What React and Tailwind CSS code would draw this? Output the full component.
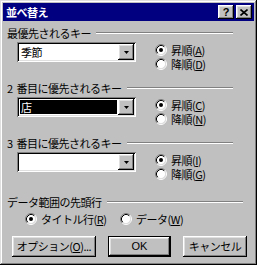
const raised =
  "shadow-[inset_-1px_-1px_#000,inset_1px_1px_#fff,inset_-2px_-2px_#808080,inset_2px_2px_#dfdfdf]";
const sunken =
  "shadow-[inset_1px_1px_#808080,inset_-1px_-1px_#fff,inset_2px_2px_#000,inset_-2px_-2px_#dfdfdf]";

function Radio({ checked }) {
  return (
    <svg width="12" height="12" viewBox="0 0 12 12" className="shrink-0">
      <circle cx="6" cy="6" r="4.5" fill="#fff" />
      <path d="M2.11 9.89A5.5 5.5 0 0 1 9.89 2.11" fill="none" stroke="#808080" />
      <path d="M9.89 2.11A5.5 5.5 0 0 1 2.11 9.89" fill="none" stroke="#fff" />
      <path d="M2.82 9.18A4.5 4.5 0 0 1 9.18 2.82" fill="none" stroke="#000" />
      <path d="M9.18 2.82A4.5 4.5 0 0 1 2.82 9.18" fill="none" stroke="#dfdfdf" />
      {checked && <circle cx="6" cy="6" r="2" fill="#000" />}
    </svg>
  );
}

function Acc({ text, k }) {
  return (
    <span className="leading-[11px]">
      {text}(<u className="underline-offset-1">{k}</u>)
    </span>
  );
}

function RadioRow({ checked, text, k }) {
  return (
    <div className="flex h-[14px] items-center gap-[4px]">
      <Radio checked={checked} />
      <Acc text={text} k={k} />
    </div>
  );
}

function Combo({ value, selected }) {
  return (
    <div className={`flex h-[20px] w-[119px] bg-white p-[2px] ${sunken}`}>
      <div className="flex flex-1 p-[1px]">
        {value && (
          <span
            className={`flex flex-1 items-center pl-[1px] ${selected ? "bg-black text-white" : ""}`}
          >
            {value}
          </span>
        )}
      </div>
      <div className={`flex w-[16px] items-center justify-center bg-[#c0c0c0] ${raised}`}>
        <svg width="5" height="3" viewBox="0 0 5 3">
          <path d="M0 0h5L2.5 3z" fill="#000" />
        </svg>
      </div>
    </div>
  );
}

function GroupHeader({ children, mr }) {
  return (
    <div className={`flex h-[14px] items-center ${mr}`}>
      <span>{children}</span>
      <div className="ml-[5px] h-[2px] flex-1 border-t border-b border-t-[#808080] border-b-white" />
    </div>
  );
}

function SortGroup({ label, value, selected, up, down }) {
  return (
    <>
      <GroupHeader mr="mr-[17px]">{label}</GroupHeader>
      <div className="mt-[2px] flex h-[39px] pl-[10px]">
        <Combo value={value} selected={selected} />
        <div className="ml-[19px] flex flex-col pt-[1px]">
          <RadioRow checked text="昇順" k={up} />
          <RadioRow text="降順" k={down} />
        </div>
      </div>
    </>
  );
}

function Button({ children, w, isDefault }) {
  const frame = isDefault
    ? "shadow-[inset_0_0_0_1px_#000,inset_-2px_-2px_#000,inset_2px_2px_#fff,inset_-3px_-3px_#808080,inset_3px_3px_#dfdfdf]"
    : raised;
  return (
    <div className={`flex h-[21px] items-center justify-center bg-[#c0c0c0] ${w} ${frame}`}>
      {children}
    </div>
  );
}

export default function App() {
  return (
    <div
      className={`flex h-[265px] w-[257px] flex-col bg-[#c0c0c0] p-[3px] font-[family-name:'Noto_Sans_CJK_JP',sans-serif] text-[11px] leading-none tracking-[-0.5px] text-black shadow-[inset_-1px_-1px_#000,inset_1px_1px_#dfdfdf,inset_-2px_-2px_#808080,inset_2px_2px_#fff]`}
    >
      <div className="flex h-[18px] items-center bg-[#000080] pl-[3px] pr-[2px]">
        <span className="font-bold text-white">並べ替え</span>
        <div className="ml-auto flex gap-[2px]">
          <div className={`flex h-[14px] w-[16px] items-center justify-center bg-[#c0c0c0] font-['Liberation_Sans',sans-serif] text-[11px] font-bold tracking-normal ${raised}`}>
            ?
          </div>
          <div className={`flex h-[14px] w-[16px] items-center justify-center bg-[#c0c0c0] ${raised}`}>
            <svg width="8" height="7" viewBox="0 0 8 7">
              <path d="M0.5 0.5l7 6M7.5 0.5l-7 6" stroke="#000" strokeWidth="1.6" />
            </svg>
          </div>
        </div>
      </div>

      <div className="flex flex-1 flex-col pl-[4px] pr-[4px]">
        <div className="mt-[5px]" />
        <SortGroup label="最優先されるキー" value="季節" up="A" down="D" />
        <SortGroup
          label={<><span className="mr-[4px]">2</span>番目に優先されるキー</>}
          value="店"
          selected
          up="C"
          down="N"
        />
        <SortGroup
          label={<><span className="mr-[4px]">3</span>番目に優先されるキー</>}
          value=""
          up="I"
          down="G"
        />

        <div className="mt-[4px]">
          <GroupHeader mr="mr-[7px]">データ範囲の先頭行</GroupHeader>
        </div>
        <div className="mt-[3px] flex pl-[18px]">
          <div className="w-[95px]">
            <RadioRow checked text="タイトル行" k="R" />
          </div>
          <RadioRow text="データ" k="W" />
        </div>

        <div className="mt-[10px] ml-[5px] flex gap-[12px]">
          <Button w="w-[84px]">
            <Acc text="オプション" k="O" />
            ...
          </Button>
          <Button w="w-[63px]" isDefault>
            <span className="font-['Liberation_Sans',sans-serif] tracking-normal">OK</span>
          </Button>
          <Button w="w-[64px]">キャンセル</Button>
        </div>
      </div>
    </div>
  );
}
